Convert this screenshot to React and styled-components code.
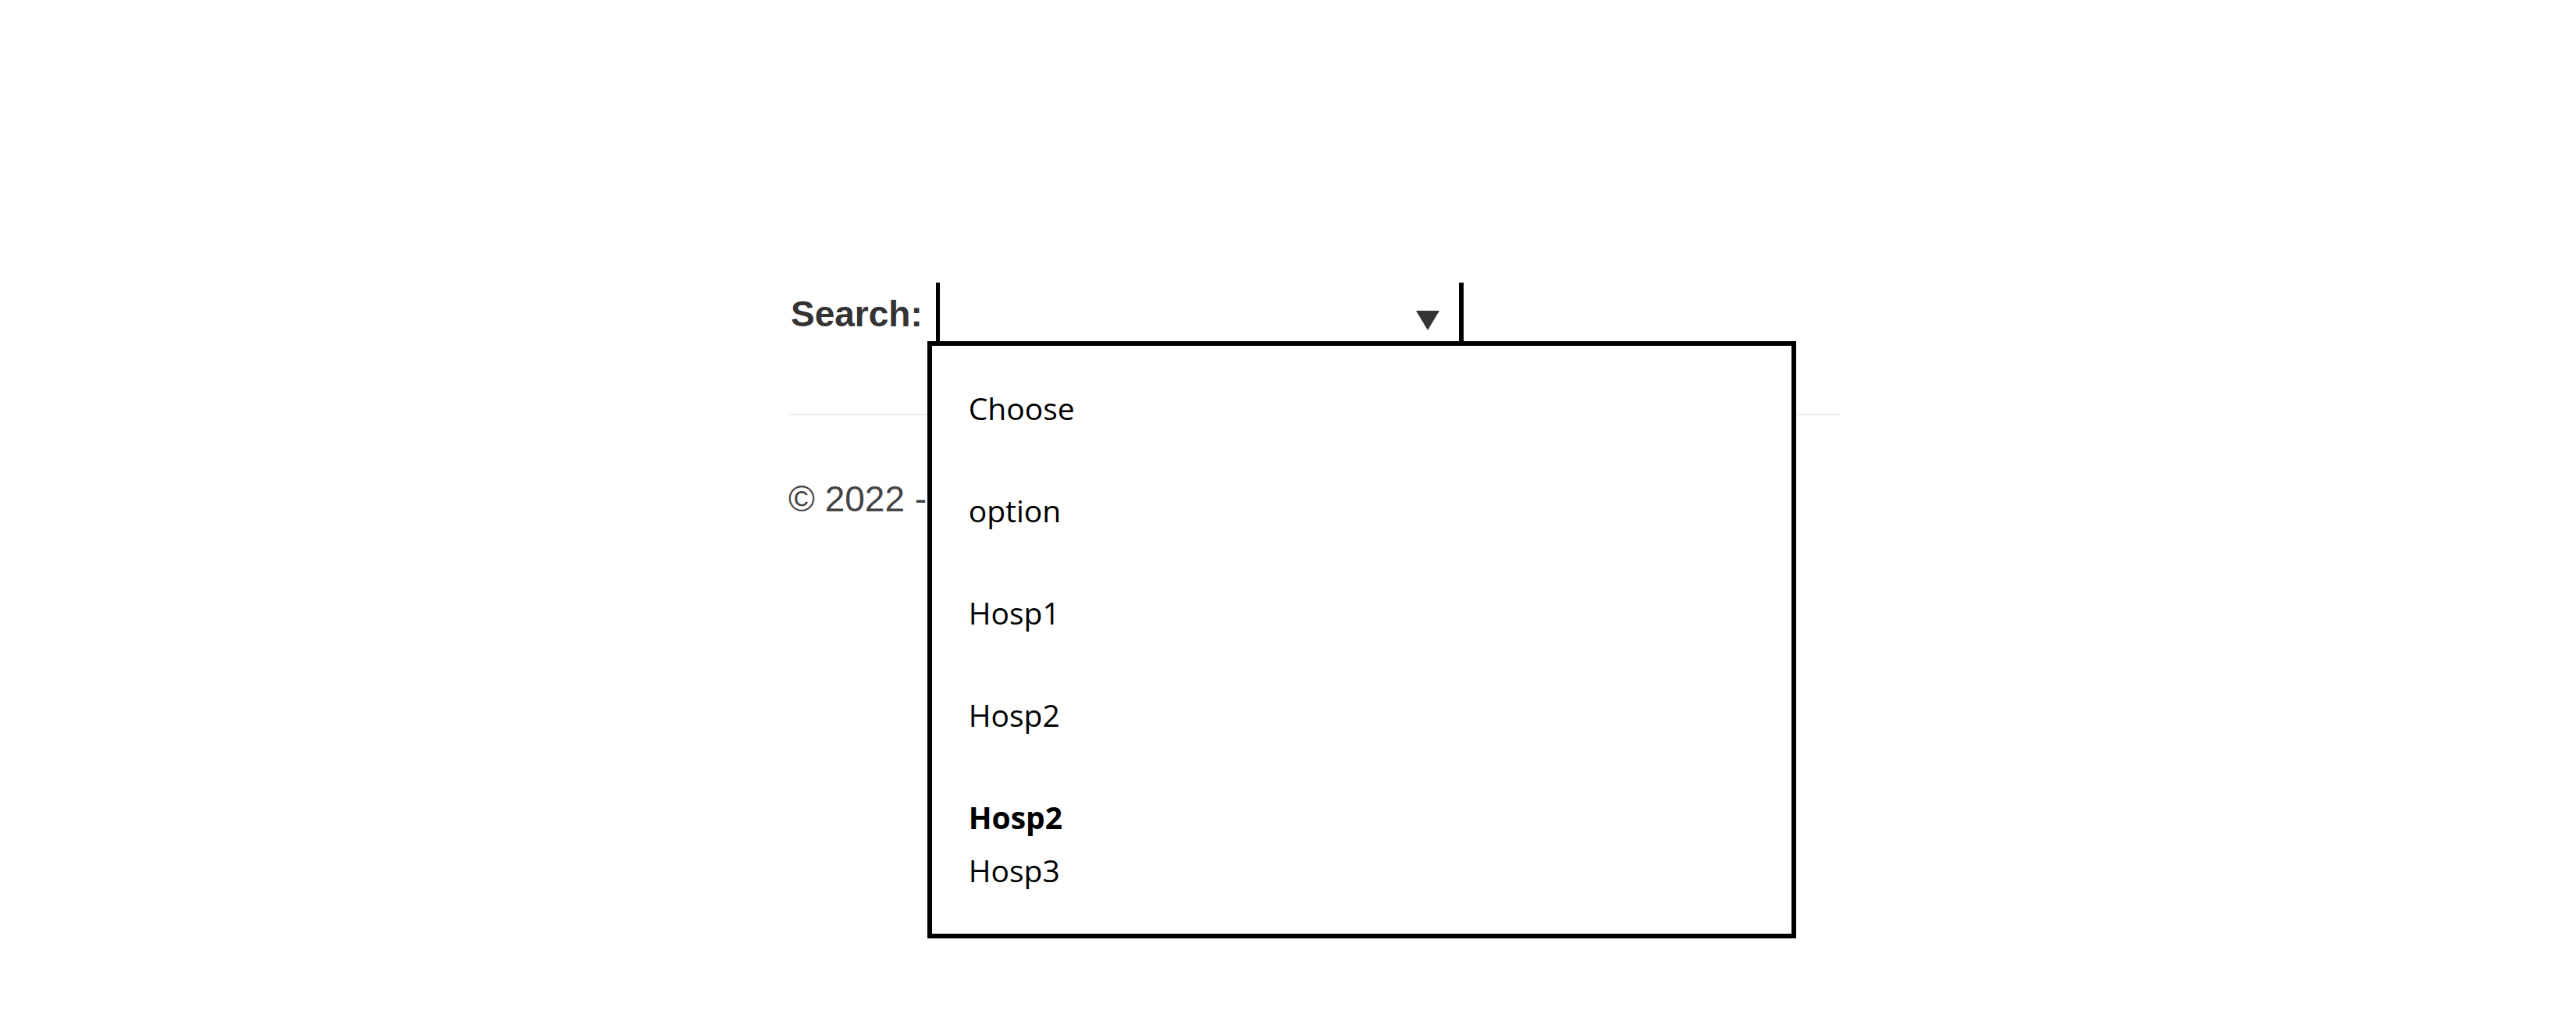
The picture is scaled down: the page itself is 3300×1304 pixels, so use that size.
import React from 'react';
import styled, { createGlobalStyle } from 'styled-components';

const GlobalStyle = createGlobalStyle`
  body {
    margin: 0;
    background: #fff;
    font-family: "Liberation Sans", Arial, sans-serif;
  }
`;

const Page = styled.div`
  margin-left: 1010px;
  padding-top: 362px;
  width: 1347px;
  min-height: 1304px;
  box-sizing: border-box;
`;

const SearchRow = styled.div`
  display: flex;
  align-items: center;
`;

const Label = styled.label`
  margin-left: 3px;
  font-size: 46px;
  font-weight: bold;
  color: #333;
  line-height: 1.15;
`;

const Select = styled.div`
  position: relative;
  margin-left: 17px;
  width: 676px;
  height: 80px;
  box-sizing: border-box;
  border-left: 5px solid #000;
  border-right: 6px solid #000;
  display: flex;
  justify-content: flex-end;
  align-items: center;
  padding: 16px 25px 0 0;
`;

const Caret = styled.svg`
  width: 30px;
  height: 25px;
  display: block;
`;

const Menu = styled.ul`
  position: absolute;
  top: 75px;
  left: -16px;
  width: 1113px;
  height: 765px;
  box-sizing: border-box;
  margin: 0;
  padding: 14px 0 0 47px;
  list-style: none;
  background: #fff;
  border: 6px solid #000;
  z-index: 2;
  font-family: "Open Sans", "Noto Sans", sans-serif;
  font-size: 39px;
  color: #000;
`;

const Option = styled.li`
  line-height: 67px;
  padding: 32px 0;
`;

const Group = styled.li`
  line-height: 68px;
  padding: 32px 0;
`;

const GroupLabel = styled.div`
  font-weight: 700;
`;

const GroupItem = styled.div``;

const Rule = styled.hr`
  margin: 88px 0 0;
  border: 0;
  border-top: 2px solid #eee;
`;

const Footer = styled.footer`
  margin-top: 81px;
  font-size: 46px;
  line-height: 1.15;
  color: #444;
`;

export default function App() {
  const options = ['Choose', 'option', 'Hosp1', 'Hosp2'];
  return (
    <>
      <GlobalStyle />
      <Page>
        <SearchRow>
          <Label>Search:</Label>
          <Select>
            <Caret viewBox="0 0 30 25">
              <polygon points="0,0 30,0 15,25" fill="#333" />
            </Caret>
            <Menu>
              {options.map((o) => (
                <Option key={o}>{o}</Option>
              ))}
              <Group>
                <GroupLabel>Hosp2</GroupLabel>
                <GroupItem>Hosp3</GroupItem>
              </Group>
            </Menu>
          </Select>
        </SearchRow>
        <Rule />
        <Footer>© 2022 -</Footer>
      </Page>
    </>
  );
}
